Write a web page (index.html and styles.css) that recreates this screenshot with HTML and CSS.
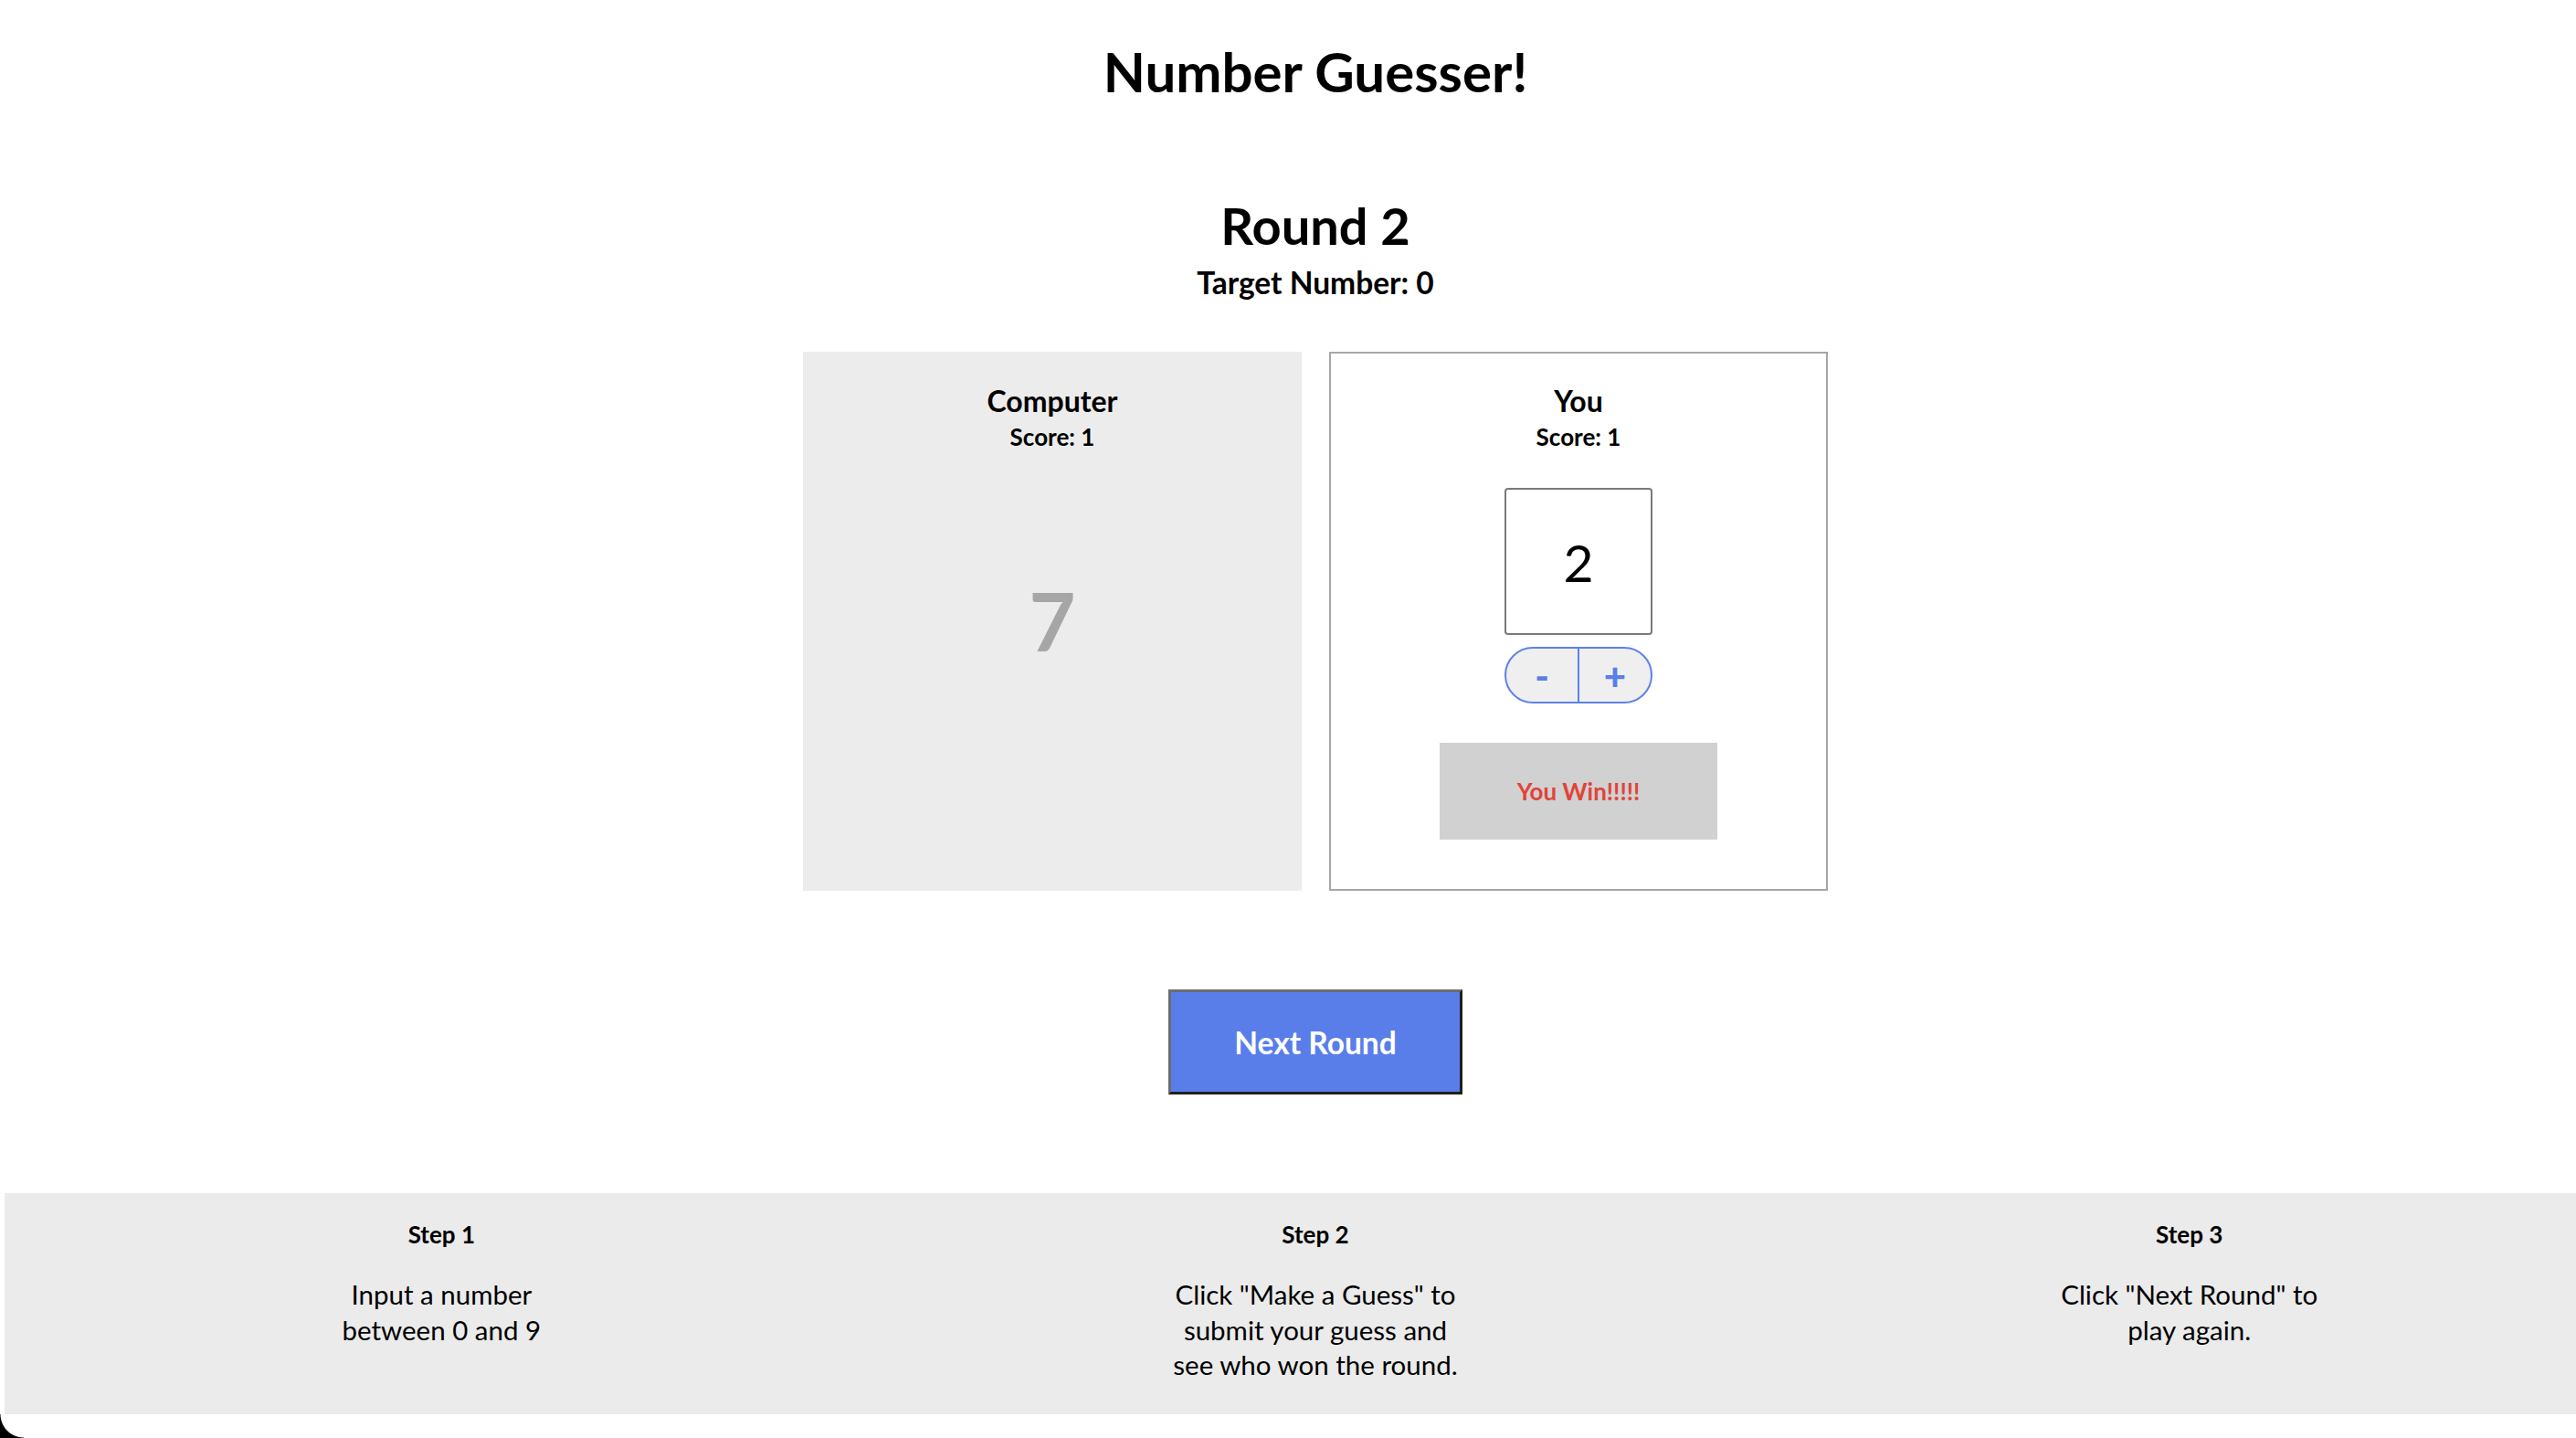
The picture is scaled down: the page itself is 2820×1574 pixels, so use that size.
FILE: index.html
```html
<!DOCTYPE html>
<html lang="en">
<head>
<meta charset="utf-8">
<title>Number Guesser</title>
<link rel="stylesheet" href="styles.css">
</head>
<body>
<div class="page">
  <header class="top">
    <h1 class="title">Number Guesser!</h1>
  </header>

  <section class="round">
    <h2 class="round-title">Round 2</h2>
    <h3 class="target">Target Number: 0</h3>
  </section>

  <section class="cards">
    <div class="card card-computer">
      <h3 class="card-name">Computer</h3>
      <p class="card-score">Score: 1</p>
      <div class="computer-guess">7</div>
    </div>
    <div class="card card-you">
      <h3 class="card-name">You</h3>
      <p class="card-score">Score: 1</p>
      <input class="guess-input" type="number" value="2" min="0" max="9">
      <div class="stepper">
        <button class="step-btn">-</button>
        <button class="step-btn">+</button>
      </div>
      <div class="result">You Win!!!!!</div>
    </div>
  </section>

  <div class="actions">
    <button class="next-btn">Next Round</button>
  </div>

  <footer class="steps">
    <div class="step">
      <h4 class="step-title">Step 1</h4>
      <p class="step-text">Input a number<br>between 0 and 9</p>
    </div>
    <div class="step">
      <h4 class="step-title">Step 2</h4>
      <p class="step-text">Click "Make a Guess" to<br>submit your guess and<br>see who won the round.</p>
    </div>
    <div class="step">
      <h4 class="step-title">Step 3</h4>
      <p class="step-text">Click "Next Round" to<br>play again.</p>
    </div>
  </footer>
</div>
<div class="corner"></div>
</body>
</html>
```

FILE: styles.css
```css
html, body {
  margin: 0;
  padding: 0;
  background: #ffffff;
  overflow: hidden;
}

.page {
  width: 2880px;
  padding-top: 43px;
  font-family: Lato, "Open Sans", sans-serif;
  color: #000000;
}

.title {
  margin: 0;
  text-align: center;
  font-size: 60px;
  line-height: 70px;
  font-weight: 700;
}

.round {
  margin-top: 101px;
  text-align: center;
}

.round-title {
  margin: 0;
  font-size: 56px;
  line-height: 66px;
  font-weight: 700;
}

.target {
  margin: 9px 0 0;
  font-size: 33.5px;
  line-height: 40px;
  font-weight: 700;
}

.cards {
  display: flex;
  justify-content: center;
  gap: 30px;
  margin-top: 56px;
}

.card {
  width: 546px;
  height: 590px;
  box-sizing: border-box;
  display: flex;
  flex-direction: column;
  align-items: center;
  padding-top: 36px;
}

.card-computer {
  background: #ececec;
}

.card-you {
  border: 2px solid #a6a6a6;
  padding-top: 34px;
  background: #ffffff;
}

.card-name {
  margin: 0;
  font-size: 32px;
  line-height: 36px;
  font-weight: 700;
}

.card-score {
  margin: 6px 0 0;
  font-size: 26px;
  line-height: 30px;
  font-weight: 700;
}

.computer-guess {
  margin-top: 136px;
  font-size: 88px;
  line-height: 100px;
  font-weight: 700;
  color: #a6a6a6;
}

.guess-input {
  margin-top: 41px;
  width: 162px;
  height: 161px;
  box-sizing: border-box;
  border: 2px solid #7a7a7a;
  border-radius: 4px;
  padding: 0;
  text-align: center;
  font-family: Lato, "Open Sans", sans-serif;
  font-size: 57px;
  color: #000000;
  background: #ffffff;
  -moz-appearance: textfield;
  outline: none;
}

.guess-input::-webkit-inner-spin-button,
.guess-input::-webkit-outer-spin-button {
  -webkit-appearance: none;
  margin: 0;
}

.stepper {
  margin-top: 13px;
  display: flex;
  width: 162px;
  height: 62px;
  box-sizing: border-box;
  border: 2px solid #5d81ec;
  border-radius: 31px;
  overflow: hidden;
  background: #efefef;
}

.step-btn {
  flex: 1;
  border: 0;
  padding: 0;
  background: transparent;
  color: #5a7fe9;
  font-family: Lato, "Open Sans", sans-serif;
  font-size: 42px;
  font-weight: 900;
  line-height: 1;
}

.step-btn + .step-btn {
  border-left: 2px solid #5d81ec;
}

.result {
  margin-top: 43px;
  width: 304px;
  height: 106px;
  background: #d1d1d1;
  display: flex;
  align-items: center;
  justify-content: center;
  color: #e0443a;
  font-size: 26px;
  font-weight: 700;
}

.actions {
  display: flex;
  justify-content: center;
  margin-top: 108px;
}

.next-btn {
  width: 322px;
  height: 115px;
  box-sizing: border-box;
  padding: 0;
  background: #597ee9;
  color: #ffffff;
  font-family: Lato, "Open Sans", sans-serif;
  font-size: 33.5px;
  font-weight: 700;
  border: 3px solid;
  border-color: #6d6d6d #1f1f1f #1f1f1f #6d6d6d;
}

.steps {
  margin: 108px 5px 0;
  background: #ebebeb;
  display: grid;
  grid-template-columns: repeat(3, 1fr);
  padding: 29px 0 34px;
  text-align: center;
}

.step-title {
  margin: 0;
  font-size: 26px;
  line-height: 32px;
  font-weight: 700;
}

.step-text {
  margin: 31px 0 0;
  font-size: 29.5px;
  line-height: 38.5px;
  font-weight: 400;
}

.corner {
  position: fixed;
  left: 0;
  bottom: 0;
  width: 26px;
  height: 26px;
  background: radial-gradient(circle at 100% 0, transparent 25px, #000000 26px);
}
```
